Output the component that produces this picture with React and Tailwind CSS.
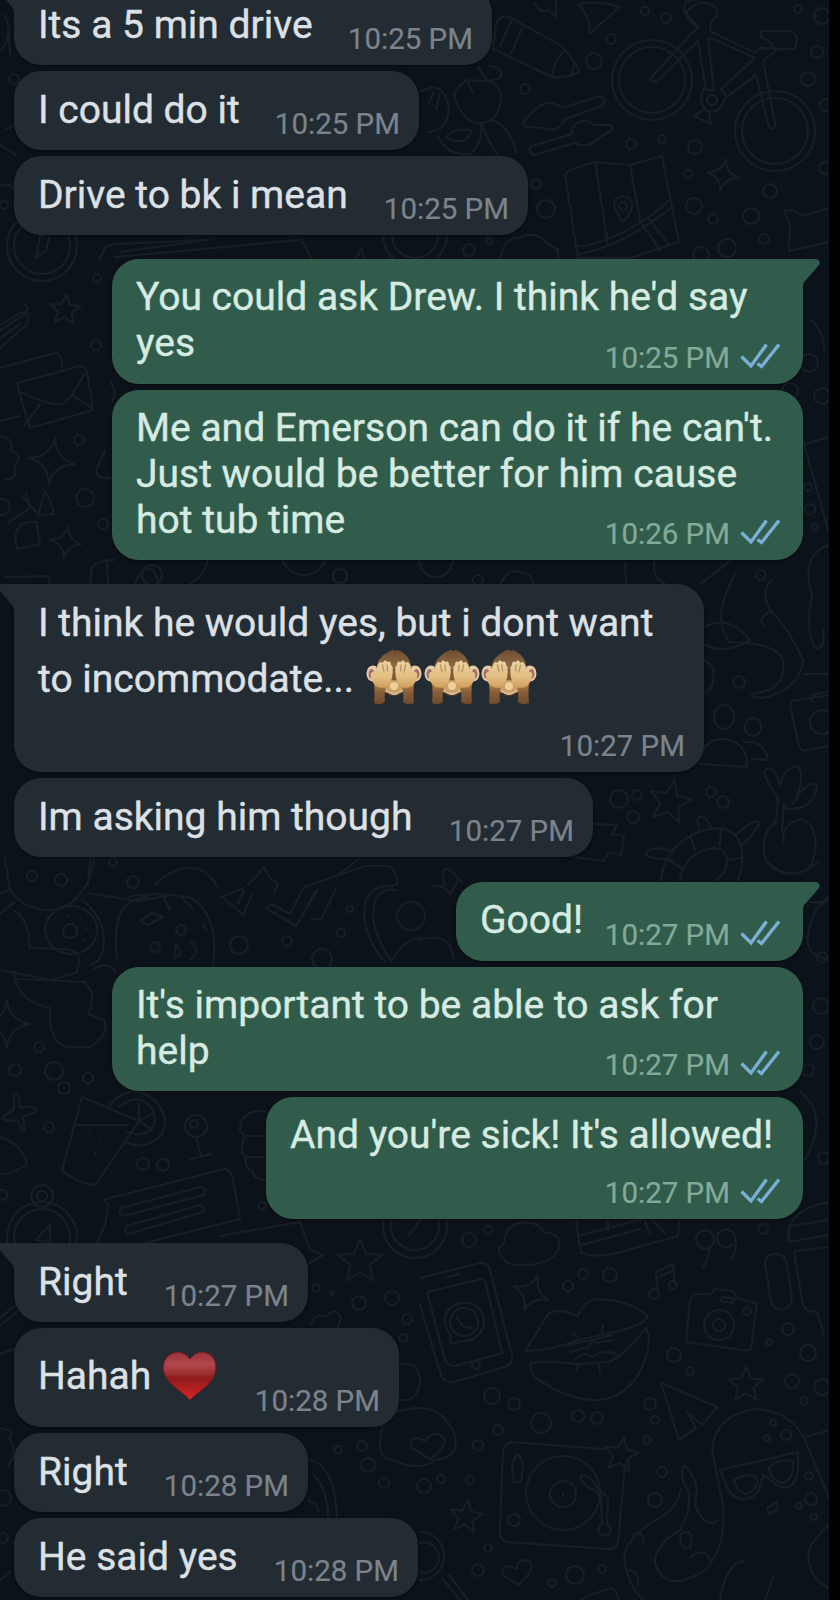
import React from "react";

const dots = [
  [645, 11, 4], [666, 18, 5], [611, 39, 5], [594, 61, 8], [525, 89, 5], [817, 52, 6], [808, 79, 7], [798, 9, 4], [822, 16, 8],
  [631, 144, 5], [662, 139, 4], [695, 147, 7], [688, 174, 4], [770, 191, 7], [694, 206, 8], [751, 216, 8], [713, 219, 5],
  [764, 239, 5], [546, 209, 9], [536, 184, 5], [727, 248, 9], [701, 255, 8], [469, 250, 6], [489, 241, 3], [825, 168, 6], [826, 105, 6],
  [97, 278, 4], [96, 345, 5], [79, 440, 5], [85, 498, 9], [103, 524, 5], [2, 507, 8], [4, 205, 4], [14, 79, 5],
  [809, 363, 9], [790, 391, 8], [822, 396, 8], [808, 487, 4], [810, 509, 5], [815, 527, 3],
  [761, 575, 5], [739, 682, 6], [619, 799, 9], [637, 795, 5], [633, 817, 6], [711, 792, 5], [723, 802, 6], [340, 576, 7], [478, 580, 5],
  [32, 876, 5], [61, 880, 6], [133, 882, 6], [113, 862, 4], [239, 945, 9], [287, 941, 5], [341, 933, 4], [350, 909, 3], [322, 959, 10],
  [39, 1047, 5], [15, 1070, 6], [54, 1071, 9], [88, 1078, 5], [64, 1088, 6], [49, 1127, 5], [143, 1164, 6], [163, 1165, 6], [2, 1195, 5], [262, 1206, 4],
  [822, 957, 5], [821, 1006, 8], [817, 1042, 7], [808, 1070, 6], [824, 1158, 6], [763, 1229, 5], [488, 1230, 4], [359, 1303, 7], [392, 1298, 7], [407, 1319, 5], [403, 1338, 4], [316, 1288, 4], [332, 1293, 2],
  [469, 1240, 7], [583, 1274, 5], [610, 1275, 7], [568, 1286, 5], [788, 1329, 6], [769, 1342, 3], [808, 1353, 8], [674, 1355, 7], [690, 1371, 4],
  [492, 1396, 8], [514, 1404, 6], [541, 1423, 10], [498, 1430, 5], [578, 1416, 6], [597, 1418, 6], [650, 1404, 6], [655, 1420, 4], [647, 1440, 4],
  [792, 1381, 7], [804, 1401, 4], [822, 1387, 8], [478, 1445, 5], [424, 1486, 7], [441, 1479, 4], [470, 1480, 4], [662, 1472, 5], [655, 1500, 7],
  [362, 1446, 5], [338, 1450, 4], [368, 1465, 7], [384, 1483, 5], [488, 1548, 4], [478, 1570, 6], [575, 1575, 9], [602, 1569, 4], [552, 1583, 4],
  [773, 1423, 3], [786, 1435, 5], [767, 1438, 3], [809, 1476, 4], [811, 1499, 6], [799, 1506, 3], [814, 1517, 3], [3, 1498, 8], [3, 1538, 5],
];

const stars = [
  [65, 310, 16, 5], [360, 1262, 23, 0], [670, 802, 22, 12], [746, 1385, 18, 0], [466, 1517, 17, 8], [621, 1455, 18, 10],
];
const sparkles = [
  [723, 175, 16, 10], [52, 461, 23, 8], [66, 542, 16, 8], [7, 1024, 23, 0], [531, 1293, 19, 22],
];

const STAR = "M0-1 L.26-.36 L.95-.31 L.42.14 L.59.81 L0 .45 L-.59.81 L-.42.14 L-.95-.31 L-.26-.36Z";
const SPARK = "M0-1 Q.14-.14 1 0 Q.14.14 0 1 Q-.14.14-1 0 Q-.14-.14 0-1Z";

const lines = [
  // pencil
  "M493 49 L496 24 Q501 13 511 18 L560 45 Q571 55 580 72 Q565 79 552 77 L493 49 M512 20 L500 46 M523 26 L511 54 M565 50 Q554 60 552 76 M574 65 L571 74",
  "M578 4 Q600 0 620 7 L589 34 Q592 18 578 4Z M535 3 Q540 14 549 10 L556 17 L556 0",
  // bicycle
  "M650 80 L655 73 L698 27 L686 13 Q696 -1 710 4 Q724 10 711 22 L710 31 L755 53 L760 48 L778 49 L763 61 L775 123 Q775 132 769 127 L756 75 L727 97 L721 89 L755 58 L711 38 L708 39 L714 90 L706 90 L698 41 L656 82Z M698 27 Q684 18 684 8 Q684 0 696 0 M761 31 L790 31 Q800 33 795 49 L775 49 Q770 40 761 37Z M703 90 Q698 103 707 111 Q720 115 725 98 M706 108 L694 116 L711 124 L709 112 M712 95 a5 5 0 1 0 .1 0",
  // cutlery
  "M523 123 Q529 114 536 109 Q548 97 562 108 L600 96 Q608 99 602 106 L565 119 Q558 134 544 128 L525 127Z M532 146 Q526 151 534 155 L575 143 Q588 150 600 137 L612 130 Q613 123 604 125 L594 125 Q583 116 573 127 L572 134Z",
  // folded map
  "M565 175 Q566 170 595 162 L630 165 L662 156 L679 242 L630 258 L578 258Z M595 162 L608 245 M630 165 L640 220 M577 247 Q625 240 670 200 M580 254 Q625 245 672 207 M648 218 L670 246 M642 224 L660 250 M623 222 Q614 210 614 204 Q615 196 623 196 Q632 197 632 205 Q632 212 623 222Z",
  // fruit figure
  "M420 92 Q444 78 449 108 Q448 130 428 132 M454 96 Q461 76 478 81 Q498 77 501 96 Q500 124 478 123 Q462 121 454 96 M478 67 L488 81 L500 78 Q505 68 490 66 M481 123 Q490 145 498 155 M492 120 Q510 126 516 152 M438 136 Q446 156 470 154 Q484 142 481 124 M446 137 Q452 128 472 130 Q466 148 446 137Z M434 92 L428 104 M440 94 L436 109 M468 83 L473 92",
  "M829 208 L802 216 Q793 208 784 211 L790 225 L789 251 L829 242",
  "M500 260 Q504 236 520 238 Q535 230 547 243 L558 250 L558 262",
  // left edge shapes
  "M99 261 L106 246 L116 244 L208 240 M120 252 L200 241 M115 257 L300 240 M303 242 L312 260 M355 262 L361 248 L366 262",
  "M0 330 L24 315 Q30 309 25 304 M0 348 L25 326 Q33 314 22 312 L0 325 M0 338 L20 324",
  "M18 383 L80 366 Q86 366 87 372 L93 410 L30 428 L18 388Z M20 392 Q55 408 64 403 Q74 394 84 374 M24 426 L40 404 M92 408 L72 395 M0 368 L55 353 Q62 354 62 366 M0 421 L20 416",
  "M0 436 Q16 440 10 450 Q25 456 14 466 Q20 478 5 480 M22 496 L40 516 M26 493 L30 508 L8 523 M45 491 Q54 506 53 514 L38 515Z M17 549 Q10 520 36 522 L40 544Z",
  "M111 382 L115 393 L112 402 M97 468 L105 450 M96 470 Q96 480 110 478 M6 577 L49 576 L50 584 M90 584 L92 568 Q97 560 114 560 M107 562 L108 584 M135 584 Q140 565 153 570 L160 584 M190 584 Q205 575 208 560",
  "M500 584 Q510 565 524 574 Q533 574 533 584 M625 562 L626 584 M655 560 Q650 580 670 586 M700 584 Q720 570 730 560",
  // right edge figures
  "M810 320 Q824 330 824 350 M803 440 L828 530 M803 445 L828 437 M829 545 Q800 555 812 595 Q805 630 815 648 Q826 650 823 630",
  "M735 574 Q710 620 730 642 Q777 643 783 660 Q787 690 755 693 Q745 697 763 698 Q800 690 803 660 Q790 630 770 610 Q760 590 772 580 M706 626 Q730 615 750 640 Q725 655 706 645 M772 610 Q755 620 765 626 M805 674 L829 674 M704 660 Q716 665 713 680 Q713 690 704 692",
  "M724 705 a10 12 0 1 0 .1 0 M753 718 a8 9 0 1 0 .1 0 M702 753 Q708 738 724 739 Q748 742 747 767 L700 764 M744 742 Q765 740 768 760 L752 759",
  "M829 695 L792 701 Q789 704 791 710 L799 746 Q802 752 808 750 L829 746 M812 701 L812 695 L829 691",
  // plant
  "M778 798 Q758 770 768 768 Q776 769 780 786 Q783 768 798 766 Q806 780 793 804 Q806 780 817 785 Q814 812 785 808 M778 798 L776 822 M784 804 L782 832 M776 822 Q758 835 766 860 Q780 880 808 870 Q820 850 813 830 Q804 812 789 825 Q781 832 784 842",
  "M595 824 L617 825 L612 834 L624 836 L621 855 L609 852 L604 861 L576 857",
  // turtle
  "M661 880 Q664 850 690 836 Q722 820 738 838 Q747 856 738 880 M680 880 Q682 862 700 852 Q722 842 727 858 Q728 872 716 880 M672 860 L654 858 Q642 856 648 851 Q660 845 674 853 M700 832 L697 820 Q702 812 708 822 L712 828 M735 835 L753 822 Q762 820 757 828 L742 846 M690 836 L695 850 M721 830 L720 845 M741 858 L727 860 M668 860 L682 868",
  // cartoon head and cloud
  "M5 858 L10 890 Q25 912 55 910 Q88 902 94 858 M90 858 L88 885 M10 890 L0 893 M15 902 Q2 911 0 914 M15 911 Q28 918 30 948 L65 949 Q85 950 76 973 L50 980 L0 970 M14 972 Q15 1000 50 1008 Q48 1040 66 1047 L90 1047 Q110 1035 104 1020 L88 1014 Q98 994 84 982 L17 979 M82 900 Q108 920 103 950 Q100 963 90 965 M88 893 L137 901 L172 895 M94 969 Q108 960 116 972",
  "M45 930 a26 24 0 1 1 25 24 Q48 952 45 930 M70 924 a7 7 0 1 0 .1 0 M56 917 v1 M68 915 v1 M80 918 v1 M86 928 v1 M84 940 v1 M56 937 v1",
  "M155 885 Q175 864 198 869 Q210 872 218 888 M128 897 Q152 891 192 898 Q220 918 213 965 M117 960 Q113 930 122 910 Q130 899 148 896 M164 898 L170 910 M182 898 L193 909 M140 921 L152 913 L163 917 L148 925Z M181 925 a5 5 0 1 0 .1 0 M203 924 l3 6 M155 942 a5 5 0 1 0 .1 0 M174 958 L176 945 Q185 955 174 958 M190 960 Q202 950 191 942",
  "M220 898 L244 888 M225 899 L243 915 L253 893 M238 903 L244 891 M248 884 L255 878 L264 867 L270 878 L278 884 L274 892 M266 908 L271 904 L290 914 L304 887 L365 866 L386 866 M266 908 L296 926 L318 890 M306 908 L316 890 M310 918 L321 920 L336 888 M338 875 L360 858",
  "M385 962 Q358 930 366 900 Q374 884 393 886 L397 884 Q396 868 388 866 M392 962 Q366 925 376 899 Q382 888 396 890 M411 902 a14 14 0 1 0 .1 0 M392 960 Q405 938 422 938",
  "M432 886 Q445 884 450 895 L458 880 M420 940 Q450 930 454 960 M445 885 Q438 865 450 870 L462 882",
  // pinwheel, drink, pushpin
  "M14 1095 Q19 1090 20 1108 Q37 1104 36 1112 Q25 1115 23 1118 L25 1130 Q21 1132 18 1120 Q3 1122 3 1117 L14 1109Z",
  "M82 1097 L139 1121 L96 1184 Q85 1187 62 1171Z M75 1125 L128 1125 M90 1133 v1 M101 1138 v1 M112 1132 v1 M95 1153 v1 M109 1106 Q130 1080 155 1100 Q172 1120 160 1136 Q145 1151 125 1142 M119 1107 Q140 1090 153 1110 Q160 1130 139 1135 L127 1132 M139 1121 L139 1103 M139 1121 L153 1113 M139 1121 L152 1130",
  "M0 1137 Q22 1143 27 1164 Q15 1174 0 1174 M196 1115 a11 11 0 1 0 .1 0 M194 1120 a4 4 0 1 0 .1 0 M196 1137 L201 1156 M190 1159 L212 1154",
  "M266 1111 Q240 1109 240 1130 Q243 1136 245 1136 Q238 1154 246 1157 L266 1157 M245 1136 L266 1136 M246 1157 Q245 1170 252 1170 Q253 1180 266 1180",
  "M108 1204 Q102 1202 106 1199 L225 1169 Q231 1170 233 1180 L240 1219 L145 1243 M108 1204 L105 1225 L97 1243 M121 1208 L201 1187 Q208 1189 204 1195 L123 1216 Q117 1213 121 1208 M127 1226 L200 1205 Q207 1208 203 1212 L128 1234 Q123 1231 127 1226 M220 1236 L300 1222 L310 1250 L323 1255 L310 1263",
  // lower left slivers
  "M0 1318 L15 1305 M0 1326 L18 1311 M0 1354 L14 1349 M0 1428 Q17 1430 9 1439 Q20 1450 8 1466 M0 1580 L10 1572 M310 1325 Q316 1312 326 1317 Q335 1305 341 1318 L338 1328 M308 1500 Q320 1505 318 1511 M309 1459 Q335 1465 337 1518 M314 1475 Q328 1490 328 1518 M399 1365 Q418 1360 420 1380 Q418 1402 400 1400",
  // heart cloud
  "M380 1450 Q378 1412 405 1410 Q440 1400 455 1435 Q460 1458 435 1460 Q420 1472 392 1460 Q382 1458 380 1450 M430 1459 L412 1448 Q408 1437 418 1438 Q423 1440 425 1441 Q433 1430 442 1436 Q450 1445 430 1459",
  // cloud
  "M504 1259 Q494 1250 504 1243 Q505 1225 520 1223 Q540 1221 543 1232 Q560 1233 559 1245 Q558 1261 530 1265 Q506 1266 504 1259",
  "M576 1222 L581 1253 Q600 1260 635 1248 L678 1236 L679 1220 M578 1236 L650 1217 M608 1230 L608 1222 M582 1245 L640 1229 M650 1235 L645 1222 M665 1233 L652 1219",
  "M708 1248 a9 9 0 1 1 2 -1 Q708 1262 702 1268 M733 1244 a9 9 0 1 1 2 -6 Q738 1250 731 1259",
  "M658 1292 L656 1272 L673 1264 L675 1284 M657 1278 L674 1270 M654 1289 a5 5 0 1 0 .1 0 M673 1281 a4 4 0 1 0 .1 0",
  "M829 1220 L790 1226 L789 1242 L829 1235 M765 1263 Q766 1253 778 1254 Q785 1255 787 1265 L792 1298 Q791 1309 782 1310 Q771 1309 770 1296Z M829 1247 L796 1251 Q793 1253 795 1257 L803 1305 Q805 1312 817 1312 L824 1335",
  // tablet
  "M420 1278 L480 1263 Q488 1262 490 1270 L512 1355 Q514 1362 507 1366 L454 1382 Q444 1383 441 1375 L420 1305 M427 1292 L482 1279 Q485 1280 486 1284 L502 1353 L455 1366 Q447 1366 445 1360Z M448 1277 L460 1274 M476 1361 a4 4 0 1 0 .1 0 M451 1344 L450 1335 Q440 1320 449 1309 Q460 1300 473 1304 Q487 1312 483 1328 Q476 1342 462 1341Z M464 1308 a14 14 0 1 0 .1 0 M457 1316 Q460 1329 473 1328",
  // lips
  "M525 1351 L549 1313 Q558 1308 578 1316 Q584 1300 597 1299 Q630 1300 648 1316 Q644 1326 610 1333 L578 1340 Q555 1350 525 1351Z M531 1363 Q540 1360 577 1364 L610 1362 Q630 1350 646 1328 Q653 1340 643 1365 Q630 1395 601 1400 Q570 1402 536 1378 Q528 1370 531 1363 M568 1345 L592 1340 L612 1335 M570 1352 L588 1347 L594 1340 M596 1343 L612 1340 M575 1360 Q582 1350 592 1357 Q605 1348 616 1354 L618 1360 M573 1333 L580 1339 M603 1325 L602 1334 M578 1365 L576 1372 M599 1364 L600 1373",
  // camera
  "M694 1294 L711 1294 L715 1289 L733 1291 L738 1299 L757 1303 L751 1348 Q749 1351 742 1350 L686 1342 L690 1300Z M719 1310 a15 15 0 1 0 .1 0 M719 1319 a6 6 0 1 0 .1 0 M722 1297 L735 1299 L732 1303 L720 1301Z M747 1307 a4 4 0 1 0 .1 0",
  // paper plane
  "M661 1383 L717 1407 L702 1425 L687 1412 L696 1428 L679 1440Z",
  // record player
  "M510 1442 L604 1449 M625 1465 L618 1542 Q615 1550 608 1549 L507 1542 Q500 1540 500 1532 L503 1450 Q505 1443 512 1442 M563 1456 a37 37 0 1 0 .1 0 M563 1481 a13 13 0 1 0 .1 0 M563 1493 v2 M517 1454 Q525 1460 522 1473 L521 1482 L514 1482 L512 1465Z M514 1514 a6 6 0 1 0 .1 0 M580 1476 Q589 1472 599 1490 L608 1498 L607 1524 a6 6 0 1 1 -5 0 L601 1497 L595 1490 Q582 1486 580 1476",
  "M518 1585 L503 1575 Q500 1566 509 1566 L516 1569 Q519 1557 530 1561 Q536 1570 518 1585Z",
  // magnifier
  "M420 1532 a24 24 0 1 1 0 48 M420 1543 a15 15 0 1 1 0 29 M442 1578 L460 1600 M449 1575 L468 1600 M580 1600 Q610 1586 615 1590 L619 1600",
  // snake and diver
  "M685 1466 Q695 1475 697 1490 L695 1505 Q705 1530 718 1520 M683 1466 Q680 1480 688 1490 Q692 1510 680 1530 Q655 1545 655 1562 Q660 1583 680 1581 Q710 1572 711 1562 M681 1489 Q678 1505 665 1515 Q625 1535 624 1560 Q628 1585 643 1600 M711 1563 Q730 1535 720 1490 L712 1450 Q715 1415 755 1409 Q790 1410 805 1440 L829 1498 M680 1535 Q695 1525 690 1548 Q680 1550 680 1535 M690 1558 Q705 1545 711 1562 M632 1535 Q645 1530 643 1543 M626 1570 Q640 1570 638 1585",
  "M720 1470 L798 1452 Q800 1475 792 1485 Q780 1492 769 1478 L763 1475 Q760 1497 746 1499 Q732 1500 726 1485Z M734 1480 Q750 1470 758 1480 Q756 1492 746 1494 Q736 1492 734 1480 M769 1468 Q780 1457 793 1462 Q794 1478 784 1483 Q772 1482 769 1468",
  "M767 1508 L777 1502 L778 1509 L769 1514Z M829 1525 Q805 1545 809 1560 Q811 1580 829 1588 M720 1600 Q725 1565 743 1561 M773 1578 L765 1600 M806 1437 L829 1430",
  "M829 960 Q800 955 810 925 Q815 905 829 900 M810 902 Q825 905 829 895 M768 862 Q790 885 818 862 M800 1092 Q830 1115 805 1160 M788 1240 Q785 1210 829 1202",
  "M5 15 Q11 28 7 40 L2 50 M8 25 L10 53 M0 145 L16 155 M0 186 Q10 183 14 188 M5 130 L14 125",
];

const rings = [
  [652, 80, 40], [652, 80, 33], [775, 131, 40], [775, 131, 33],
  [42, 246, 35], [42, 246, 28], [42, 1237, 35], [42, 1237, 28], [42, 1196, 11], [42, 1196, 5],
  [415, 1226, 32], [415, 1226, 24], [415, 235, 32], [415, 235, 23], [304, 552, 23], [436, 560, 17], [152, 575, 10],
  [822, 722, 12], [623, 206, 4],
];

function Wallpaper() {
  return (
    <svg className="absolute inset-0" width="840" height="1600" viewBox="0 0 840 1600" fill="none" stroke="#181e26" strokeWidth="2.2" strokeLinecap="round" strokeLinejoin="round">
      {lines.map((d, i) => <path key={i} d={d} />)}
      {rings.map(([x, y, r], i) => <circle key={i} cx={x} cy={y} r={r} />)}
      {dots.map(([x, y, r], i) => <circle key={i} cx={x} cy={y} r={r} />)}
      <path d="M36 258 L40 236 L51 232 L46 250Z M36 1240 L50 1224 L50 1242Z M408 1236 L422 1218" />
      {stars.map(([x, y, s, a], i) => (
        <path key={i} d={STAR} transform={`translate(${x} ${y}) rotate(${a}) scale(${s})`} strokeWidth={2.2 / s} />
      ))}
      {sparkles.map(([x, y, s, a], i) => (
        <path key={i} d={SPARK} transform={`translate(${x} ${y}) rotate(${a}) scale(${s})`} strokeWidth={2.2 / s} />
      ))}
    </svg>
  );
}

function Monkey() {
  return (
    <svg className="relative -top-[2px] shrink-0" width="57.5" height="56" viewBox="0 0 57.5 56">
      <defs>
        <linearGradient id="fur" x1="0" y1="0" x2="0" y2="1">
          <stop offset="0" stopColor="#6d4d30" />
          <stop offset=".35" stopColor="#8b6743" />
          <stop offset="1" stopColor="#7a5331" />
        </linearGradient>
        <linearGradient id="hand" x1="0" y1="0" x2="0" y2="1">
          <stop offset="0" stopColor="#e9d3a4" />
          <stop offset=".6" stopColor="#e3bf83" />
          <stop offset="1" stopColor="#cf9d5c" />
        </linearGradient>
        <linearGradient id="arm" x1="0" y1="0" x2="0" y2="1">
          <stop offset="0" stopColor="#b98648" />
          <stop offset=".45" stopColor="#8a5f38" />
          <stop offset="1" stopColor="#6c492e" />
        </linearGradient>
      </defs>
      <ellipse cx="7" cy="24.500" rx="6.500" ry="8" fill="#e6cda8" />
      <ellipse cx="49" cy="24.500" rx="6.500" ry="8" fill="#e6cda8" />
      <ellipse cx="5.500" cy="25" rx="3" ry="5" fill="#a8706a" />
      <ellipse cx="50.500" cy="25" rx="3" ry="5" fill="#a8706a" />
      <path d="M10 22 Q10 9 22 3 L27 .5 L29 2 L32 1 Q45 6 46 22 Q47 36 39 42 Q28 48 17 42 Q9 36 10 22Z" fill="url(#fur)" />
      <ellipse cx="28" cy="38" rx="10.500" ry="7" fill="#caa06a" />
      <path d="M19 41 Q28 49 37 41" fill="none" stroke="#d8b98a" strokeWidth="2.200" />
      <path d="M21 44 Q28 50 35 44" fill="none" stroke="#4f3522" strokeWidth="1.200" />
      <path d="M8 33 L20 38 Q18 46 19 53 Q13 57 8 54 Q9 44 8 33Z M48 33 L36 38 Q38 46 37 53 Q43 57 48 54 Q47 44 48 33Z" fill="url(#arm)" />
      <path d="M5 24 Q10 22 12 16 Q14 11 16.500 14 Q19 9 21 13 Q25 11 25 16 Q28 18 26.500 25 Q26 34 20 38.500 Q12 40 8 35 Q4 30 5 24Z M51 24 Q46 22 44 16 Q42 11 39.500 14 Q37 9 35 13 Q31 11 31 16 Q28 18 29.500 25 Q30 34 36 38.500 Q44 40 48 35 Q52 30 51 24Z" fill="url(#hand)" />
      <path d="M16.500 16 L18 23 M21 16 L21.500 22 M39.500 16 L38 23 M35 16 L34.500 22" stroke="#b89560" strokeWidth="1.300" fill="none" strokeLinecap="round" />
      <path d="M26.500 20 L28 33 L29.500 20" fill="#7d5a3a" />
      <ellipse cx="28" cy="37" rx="4" ry="4" fill="#efcf96" />
    </svg>
  );
}

function Heart() {
  return (
    <svg className="shrink-0" width="56" height="50" viewBox="0 0 56 50">
      <defs>
        <linearGradient id="heart" x1="0" y1="0" x2="0" y2="1">
          <stop offset="0" stopColor="#9c3038" />
          <stop offset=".25" stopColor="#b0484e" />
          <stop offset=".44" stopColor="#9d2f32" />
          <stop offset=".54" stopColor="#901a1b" />
          <stop offset="1" stopColor="#d82626" />
        </linearGradient>
      </defs>
      <path d="M28 8 Q33 1 41 1 Q54 3 54 17 Q53 29 41 38 Q34 43 28 49 Q22 43 15 38 Q2 28 1 17 Q2 3 15 1 Q23 1 28 8Z" fill="url(#heart)" stroke="#6d1c21" strokeWidth="1" />
    </svg>
  );
}

function Ticks() {
  return (
    <svg className="mb-[6px] ml-[10px]" width="41" height="26" viewBox="0 0 41 26" fill="none" stroke="#78b0d6" strokeWidth="3.4">
      <path d="M1.500 13.500 L11 23 L26.500 1.500 M17.500 20.500 L21.500 23.500 L39 1.500" />
    </svg>
  );
}

function Bubble({ out, tail, size, time, children }) {
  return (
    <div
      className={`relative grid shrink-0 rounded-[27px] shadow-[0_1px_3px_rgba(0,0,0,0.45)] ${size} ${
        out ? "self-end bg-[#315c4b] text-[#d6ebe1]" : "self-start bg-[#232b33] text-[#dde1e5]"
      } ${tail ? (out ? "rounded-tr-none" : "rounded-tl-none") : ""}`}
    >
      {tail && out && (
        <svg className="absolute top-0 -right-[17px]" width="18" height="28" viewBox="0 0 18 28">
          <path d="M0 0 H14 Q19 1 17 6 L4 21 Q1 23 1 28 H0Z" fill="#315c4b" />
        </svg>
      )}
      {tail && !out && (
        <svg className="absolute top-0 -left-[14px]" width="15" height="28" viewBox="0 0 15 28">
          <path d="M15 0 H0 V7 L12 21 Q14 23 14 28 H15Z" fill="#232b33" />
        </svg>
      )}
      <div
        className={`[grid-area:1/1] pl-6 text-[39px] leading-[46px] whitespace-nowrap [-webkit-text-stroke:0.4px] ${
          out ? "pt-[15px]" : "pt-4"
        }`}
      >
        {children}
      </div>
      <div
        className={`[grid-area:1/1] flex items-end self-end justify-self-end pb-[9px] text-[29.5px] leading-[34px] whitespace-nowrap [-webkit-text-stroke:0.2px] ${
          out ? "pr-[22px] text-[#83aa99]" : "pr-[19px] text-[#7c838b]"
        }`}
      >
        <span>{time}</span>
        {out && <Ticks />}
      </div>
    </div>
  );
}

export default function App() {
  return (
    <div className="relative flex h-[1600px] w-[840px] overflow-hidden bg-[#0c1219] font-['Roboto',sans-serif]">
      <Wallpaper />
      <div className="relative -mt-[14px] flex h-[1614px] w-[829px] flex-col pr-[26px] pl-[14px]">
        <div className="flex flex-col gap-[6px]">
          <Bubble tail size="h-[79px] w-[478px]" time="10:25 PM">Its a 5 min drive</Bubble>
          <Bubble size="h-[79px] w-[405px]" time="10:25 PM">I could do it</Bubble>
          <Bubble size="h-[79px] w-[514px]" time="10:25 PM">Drive to bk i mean</Bubble>
        </div>
        <div className="mt-6 flex flex-col gap-[6px]">
          <Bubble out tail size="h-[125px] w-[691px]" time="10:25 PM">
            <div>You could ask Drew. I think he'd say</div>
            <div>yes</div>
          </Bubble>
          <Bubble out size="h-[170px] w-[691px]" time="10:26 PM">
            <div>Me and Emerson can do it if he can't.</div>
            <div>Just would be better for him cause</div>
            <div>hot tub time</div>
          </Bubble>
        </div>
        <div className="mt-6 flex flex-col gap-[6px]">
          <Bubble tail size="h-[188px] w-[690px]" time="10:27 PM">
            <div>I think he would yes, but i dont want</div>
            <div className="mt-[1px] flex h-[64px] items-center">
              <span className="mr-[12px]">to incommodate...</span>
              <Monkey />
              <Monkey />
              <Monkey />
            </div>
          </Bubble>
          <Bubble size="h-[79px] w-[579px]" time="10:27 PM">Im asking him though</Bubble>
        </div>
        <div className="mt-[25px] flex flex-col gap-[6px]">
          <Bubble out tail size="h-[79px] w-[347px]" time="10:27 PM">Good!</Bubble>
          <Bubble out size="h-[124px] w-[691px]" time="10:27 PM">
            <div>It's important to be able to ask for</div>
            <div>help</div>
          </Bubble>
          <Bubble out size="h-[122px] w-[537px]" time="10:27 PM">And you're sick! It's allowed!</Bubble>
        </div>
        <div className="mt-6 flex flex-col gap-[6px]">
          <Bubble tail size="h-[79px] w-[294px]" time="10:27 PM">Right</Bubble>
          <Bubble size="h-[99px] w-[385px]" time="10:28 PM">
            <div className="flex h-[63px] items-center">
              <span className="mr-[11px]">Hahah</span>
              <Heart />
            </div>
          </Bubble>
          <Bubble size="h-[79px] w-[294px]" time="10:28 PM">Right</Bubble>
          <Bubble size="h-[79px] w-[404px]" time="10:28 PM">He said yes</Bubble>
        </div>
      </div>
      <div className="relative w-[11px] bg-black" />
    </div>
  );
}
